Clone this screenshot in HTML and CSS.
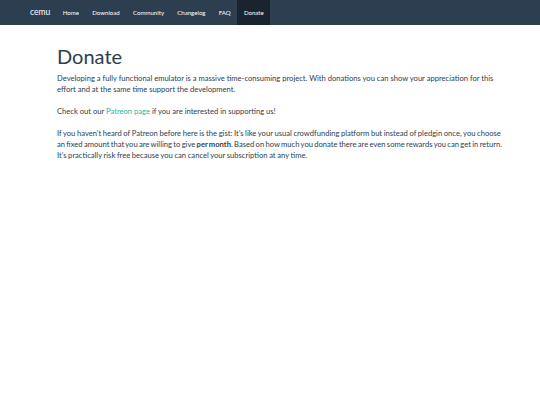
FILE: index.html
```html
<!DOCTYPE html>
<html lang="en">
<head>
<meta charset="utf-8">
<title>Donate - cemu</title>
<link rel="stylesheet" href="styles.css">
</head>
<body>
<nav class="navbar">
  <a class="brand" href="#">cemu</a>
  <ul class="nav">
    <li><a href="#">Home</a></li>
    <li><a href="#">Download</a></li>
    <li><a href="#">Community</a></li>
    <li><a href="#">Changelog</a></li>
    <li><a href="#">FAQ</a></li>
    <li class="active"><a href="#">Donate</a></li>
  </ul>
</nav>
<main class="container">
  <h1>Donate</h1>
  <p>Developing a fully functional emulator is a massive time-consuming project. With donations you can show your appreciation for this effort and at the same time support the development.</p>
  <p>Check out our <a class="link" href="#">Patreon page</a> if you are interested in supporting us!</p>
  <p class="gist">If you haven’t heard of Patreon before here is the gist: It’s like your usual crowdfunding platform but instead of pledgin once, you choose <span class="tight">an fixed amount that you are willing to give <strong>per month</strong>. Based on how much you donate there are even some rewards you can get in return.</span> It’s practically risk free because you can cancel your subscription at any time.</p>
</main>
</body>
</html>
```

FILE: styles.css
```css
html, body {
  margin: 0;
  padding: 0;
  background: #ffffff;
}
body {
  font-family: Lato, "Open Sans", sans-serif;
  color: #2c3e50;
}
.navbar {
  background: #2c3e50;
  height: 25px;
  display: flex;
  align-items: stretch;
  padding-left: 30px;
}
.brand {
  color: #ffffff;
  text-decoration: none;
  font-size: 8.5px;
  line-height: 25px;
  margin-right: 6px;
}
.nav {
  list-style: none;
  margin: 0;
  padding: 0;
  display: flex;
}
.nav li a {
  display: block;
  color: #ffffff;
  text-decoration: none;
  font-size: 6.1px;
  line-height: 25px;
  padding: 0 6.6px;
}
.nav li.active a {
  background: #1a242f;
}
.container {
  margin-left: 57px;
  width: 452px;
  padding-top: 19px;
}
h1 {
  font-size: 20px;
  font-weight: 400;
  line-height: 24px;
  margin: 0 0 5px;
}
p {
  font-size: 7.6px;
  line-height: 11px;
  margin: 0 0 11px;
}
.gist {
  word-spacing: -0.3px;
}
.gist .tight {
  word-spacing: -0.6px;
}
.link {
  color: #18bc9c;
  text-decoration: none;
}
strong {
  font-weight: 700;
}
```
